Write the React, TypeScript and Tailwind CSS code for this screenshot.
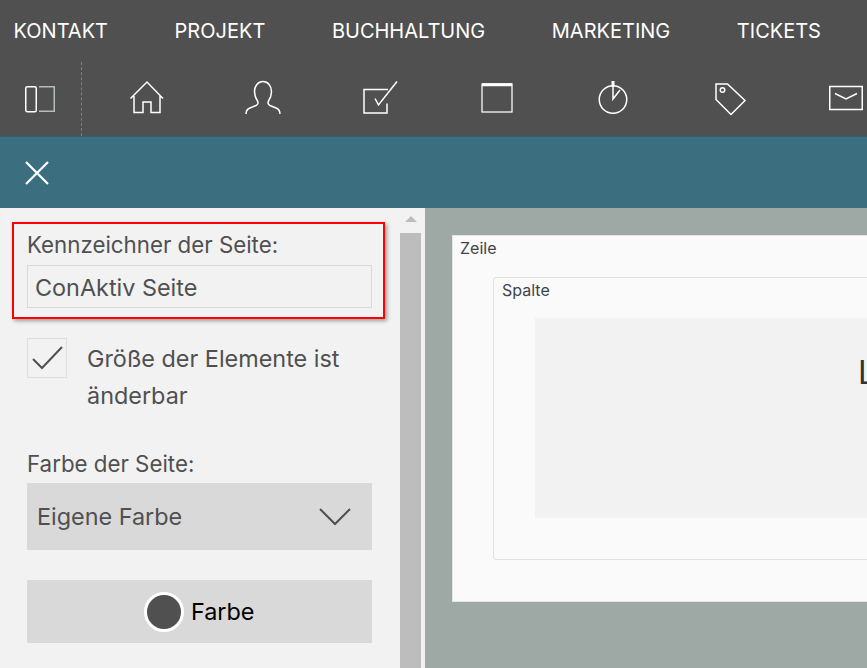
import React from "react";

const s = { fill: "none", stroke: "#fff", strokeWidth: 1.5 };

function Icon({ children }: { children: React.ReactNode }) {
  return (
    <div className="flex w-[116.6px] shrink-0 items-center justify-center">
      <svg width="36" height="36" viewBox="0 0 36 36">{children}</svg>
    </div>
  );
}

const navItems = ["KONTAKT", "PROJEKT", "BUCHHALTUNG", "MARKETING", "TICKETS"];

export default function App() {
  return (
    <div className="flex h-[668px] w-[867px] flex-col overflow-hidden bg-[#9ea9a5] font-['Inter',sans-serif]">
      <header className="h-[136px] shrink-0 bg-[#505050]">
        <nav className="flex h-[62px] items-center gap-[66.600px] pl-[13.500px] text-[20px] text-white">
          {navItems.map((n) => (
            <span key={n}>{n}</span>
          ))}
        </nav>
        <div className="flex h-[74px] items-stretch">
          <div className="flex w-[82px] shrink-0 items-center justify-center border-r border-dashed border-[#808080] pr-[1px]">
            <svg width="32" height="30" viewBox="0 0 32 30" className="mt-[-1px]">
              <rect x="1.750" y="2.750" width="10.500" height="25" rx="1.500" {...s} />
              <path d="M15 2.750H30.250V27.250H15" fill="none" stroke="#b4bdb9" strokeWidth="1.500" />
            </svg>
          </div>
          <div className="flex pl-[6.500px] pb-[2px]">
            <Icon>
              <path d="M1.500 18.500 18 2l16 16.500M5 16v16.500h9V22h8v10.500h9V16" {...s} />
            </Icon>
            <Icon>
              <path d="M1 34c0-3 1.500-5 4-6l6-2.500c2-1 2.500-2.500 1.500-4.500-2-3-3-6-3-9.500C9.500 6 13 1.500 18 1.500S26.500 6 26.500 11.500c0 3.500-1 6.500-3 9.500-1 2-.5 3.500 1.500 4.500l6 2.500c2.500 1 4 3 4 6" {...s} />
            </Icon>
            <Icon>
              <path d="M26 9.500H2V33h23V23.500" {...s} />
              <path d="m13 18.500 3.500 6.500L35 1.500" {...s} />
            </Icon>
            <Icon>
              <rect x="3" y="4" width="30" height="28" fill="none" stroke="#fff" strokeWidth="1.250" />
              <path d="M3 4.750h30" stroke="#fff" strokeWidth="3" />
            </Icon>
            <Icon>
              <circle cx="18" cy="19.500" r="13.750" {...s} />
              <path d="M18 1v18l7-9" fill="none" stroke="#fff" strokeWidth="1.500" />
              <path d="M18 1v6" stroke="#fff" strokeWidth="3" />
            </Icon>
            <Icon>
              <path d="M4 4h11.500L33 20.500 19 34.500 4 19.500Z" {...s} />
              <circle cx="10.500" cy="10" r="2.250" {...s} />
            </Icon>
            <Icon>
              <rect x="1.750" y="6.500" width="32.500" height="23" {...s} />
              <path d="m7 13.500 11 5.500 11-5.500" {...s} />
            </Icon>
          </div>
        </div>
      </header>

      <div className="flex h-[72px] shrink-0 items-center border-t border-[#2f6070] bg-[#3b6f80] pl-[23px]">
        <svg width="28" height="28" viewBox="0 0 28 28">
          <path d="M3 3l22 22M25 3 3 25" fill="none" stroke="#fff" strokeWidth="2.250" />
        </svg>
      </div>

      <main className="flex min-h-0 flex-1">
        <aside className="flex w-[425px] shrink-0 bg-[#f2f2f2]">
          <div className="w-[400px] shrink-0 pt-[14px] pl-[12px] text-[#505050]">
            <div className="h-[97px] w-[373px] border-2 border-[#ff0000] px-[13px] shadow-[2px_2px_4px_rgba(0,0,0,0.35)]">
              <div className="pt-[5px] text-[22.300px] leading-[32px]">Kennzeichner der Seite:</div>
              <div className="mt-[4px] flex h-[43px] w-[345px] items-center border border-[#d9d9d9] pl-[7px] pt-[2px] text-[23.400px]">
                ConAktiv Seite
              </div>
            </div>
            <div className="mt-[19px] flex pl-[15px]">
              <div className="flex h-[40px] w-[40px] shrink-0 items-center justify-center border border-[#dedede]">
                <svg width="32" height="26" viewBox="0 0 32 26">
                  <path d="m2 14 9 9L31 2" fill="none" stroke="#505050" strokeWidth="2" />
                </svg>
              </div>
              <div className="ml-[20px] w-[270px] pt-[2px] text-[23.400px] leading-[37px]">
                Größe der Elemente ist änderbar
              </div>
            </div>
            <div className="mt-[34px] pl-[15px] text-[22.300px] leading-[32px]">Farbe der Seite:</div>
            <div className="ml-[15px] mt-[3px] flex h-[67px] w-[345px] items-center justify-between bg-[#d9d9d9] pl-[10px] pr-[21px] text-[23.400px]">
              <span>Eigene Farbe</span>
              <svg width="32" height="18" viewBox="0 0 32 18">
                <path d="m1 1 15 15L31 1" fill="none" stroke="#505050" strokeWidth="2" />
              </svg>
            </div>
            <div className="ml-[15px] mt-[30px] flex h-[63px] w-[345px] items-center gap-[7px] bg-[#d9d9d9] pl-[117px] text-[23.400px] text-black">
              <span className="h-[40px] w-[40px] rounded-full border-[3px] border-white bg-[#505050]" />
              <span>Farbe</span>
            </div>
          </div>
          <div className="flex w-[21px] shrink-0 flex-col items-center">
            <div className="mt-[8px] h-0 w-0 border-x-[6px] border-b-[6px] border-x-transparent border-b-[#bdbdbd]" />
            <div className="mt-[11px] w-full flex-1 bg-[#bdbdbd]" />
          </div>
        </aside>

        <section className="min-w-0 flex-1 pl-[27px] pt-[27px]">
          <div className="h-[367px] w-[500px] border border-[#e5e5e5] bg-[#fafafa] pl-[40px]">
            <div className="-ml-[33px] h-[41px] text-[16px] leading-[24px] text-[#3f444b]">Zeile</div>
            <div className="h-[283px] rounded-[3px] border border-[#e0e0e0] pl-[41px]">
              <div className="-ml-[33px] h-[40px] text-[16px] leading-[24px] text-[#3f444b]">Spalte</div>
              <div className="h-[200px] bg-[#f2f2f2] pl-[323px] pt-[33px] text-[32px] leading-[44px] text-[#333]">L</div>
            </div>
          </div>
        </section>
      </main>
    </div>
  );
}
